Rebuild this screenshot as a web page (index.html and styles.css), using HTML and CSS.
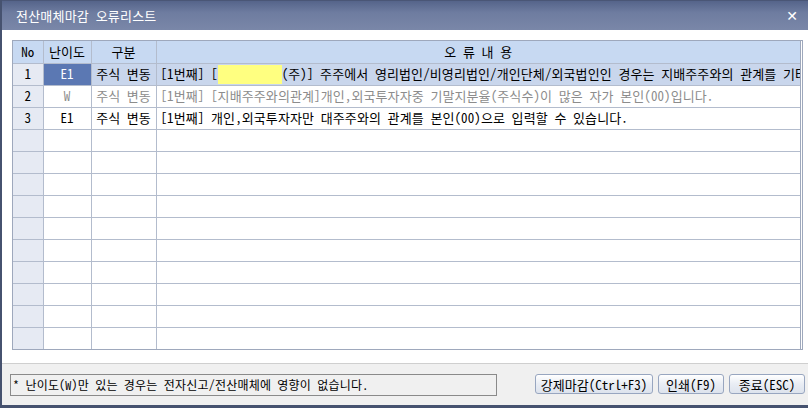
FILE: index.html
```html
<!DOCTYPE html>
<html lang="ko">

<head>
    <meta charset="UTF-8">
    <title>전산매체마감 오류리스트</title>
    <link rel="stylesheet" href="styles.css">
</head>

<body>
    <div class="window">
        <div class="title-bar">
            <span class="title">전산매체마감 오류리스트</span>
            <span class="close">&#x2715;</span>
        </div>
        <div class="content">
            <div class="grid">
                <table class="list">
                    <colgroup>
                        <col class="c-no">
                        <col class="c-level">
                        <col class="c-kind">
                        <col>
                    </colgroup>
                    <thead>
                        <tr>
                            <th>No</th>
                            <th>난이도</th>
                            <th>구분</th>
                            <th>오 류 내 용</th>
                        </tr>
                    </thead>
                    <tbody>
                        <tr class="selected">
                            <td class="no">1</td>
                            <td class="level on">E1</td>
                            <td class="kind">주식 변동</td>
                            <td class="msg">[1번째] [<span class="mark"></span>(주)] 주주에서 영리법인/비영리법인/개인단체/외국법인인 경우는 지배주주와의 관계를 기타</td>
                        </tr>
                        <tr class="warn">
                            <td class="no">2</td>
                            <td class="level">W</td>
                            <td class="kind">주식 변동</td>
                            <td class="msg">[1번째] [지배주주와의관계]개인,외국투자자중 기말지분율(주식수)이 많은 자가 본인(00)입니다.</td>
                        </tr>
                        <tr>
                            <td class="no">3</td>
                            <td class="level">E1</td>
                            <td class="kind">주식 변동</td>
                            <td class="msg">[1번째] 개인,외국투자자만 대주주와의 관계를 본인(00)으로 입력할 수 있습니다.</td>
                        </tr>
                        <tr><td class="no"></td><td></td><td></td><td></td></tr>
                        <tr><td class="no"></td><td></td><td></td><td></td></tr>
                        <tr><td class="no"></td><td></td><td></td><td></td></tr>
                        <tr><td class="no"></td><td></td><td></td><td></td></tr>
                        <tr><td class="no"></td><td></td><td></td><td></td></tr>
                        <tr><td class="no"></td><td></td><td></td><td></td></tr>
                        <tr><td class="no"></td><td></td><td></td><td></td></tr>
                        <tr><td class="no"></td><td></td><td></td><td></td></tr>
                        <tr><td class="no"></td><td></td><td></td><td></td></tr>
                        <tr><td class="no"></td><td></td><td></td><td></td></tr>
                    </tbody>
                </table>
            </div>
        </div>
        <div class="footer">
            <div class="status">* 난이도(W)만 있는 경우는 전자신고/전산매체에 영향이 없습니다.</div>
            <div class="buttons">
                <button class="btn btn-close-force">강제마감(Ctrl+F3)</button>
                <button class="btn btn-print">인쇄(F9)</button>
                <button class="btn btn-exit">종료(ESC)</button>
            </div>
        </div>
    </div>
</body>

</html>
```

FILE: styles.css
```css
* {
    margin: 0;
    padding: 0;
    box-sizing: border-box;
}

body {
    width: 808px;
    height: 408px;
    overflow: hidden;
    font-family: "Noto Sans Mono CJK KR", "Noto Sans CJK KR", "Liberation Mono", monospace;
    font-size: 13px;
    letter-spacing: 0.1px;
    color: #000;
    background-color: #fff;
}

.window {
    width: 808px;
    height: 408px;
    border-left: 2px solid #46526f;
    border-bottom: 3px solid #46526f;
    display: flex;
    flex-direction: column;
    background-color: #fff;
}

.title-bar {
    height: 30px;
    display: flex;
    align-items: center;
    justify-content: space-between;
    padding: 0 10px 0 14px;
    background: linear-gradient(to bottom, #55648a, #6e7ca0 40%, #7a87a8);
    border-top: 1px solid #4a5676;
    color: #fff;
}

.title {
    font-size: 13px;
    letter-spacing: 0.2px;
}

.close {
    font-family: "DejaVu Sans", sans-serif;
    font-size: 14px;
    font-weight: bold;
}

.content {
    padding: 10px 5px 13px 10px;
}

.grid {
    width: 791px;
    border: 1px solid #9ea8bc;
    border-right: 3px double #9ea8bc;
}

.list {
    width: 100%;
    table-layout: fixed;
    border-collapse: collapse;
}

.c-no {
    width: 30px;
}

.c-level {
    width: 48px;
}

.c-kind {
    width: 65px;
}

.list th,
.list td {
    height: 22px;
    border: 1px solid #b3bccd;
    text-align: center;
    font-weight: normal;
    white-space: nowrap;
    overflow: hidden;
    line-height: 20px;
}

.list thead th {
    border-top: none;
}

.list th:first-child,
.list td:first-child {
    border-left: none;
}

.list th:last-child,
.list td:last-child {
    border-right: none;
}

.list tbody tr:last-child td {
    border-bottom: none;
}

.list th {
    background-color: #c7d9f2;
}

.list .no {
    background-color: #e6eaf3;
}

.list .kind {
    letter-spacing: 0;
}

.list .msg {
    text-align: left;
    padding-left: 4px;
    text-overflow: clip;
}

.selected td {
    background-color: #c9d6ec;
}

.selected .no {
    background-color: #e6eaf3;
}

.selected .level.on {
    background-color: #5b78b3;
    color: #fff;
}

.warn td {
    color: #8c8c8c;
}

.warn .no {
    color: #000;
}

.mark {
    display: inline-block;
    width: 64px;
    height: 19px;
    vertical-align: -5px;
    background-color: #ffff80;
}

.footer {
    flex: 1;
    display: flex;
    align-items: flex-start;
    justify-content: space-between;
    padding: 10px 3px 0 8px;
    border-top: 1px solid #cfcfcf;
    background-color: #f0f0f0;
}

.status {
    width: 487px;
    height: 22px;
    line-height: 20px;
    padding-left: 2px;
    font-size: 12px;
    letter-spacing: 0.2px;
    border: 1px solid #8a8a8a;
    background-color: #f0f0f0;
}

.buttons {
    display: flex;
    gap: 5px;
}

.btn {
    height: 20px;
    padding: 0;
    font-family: inherit;
    font-size: 13px;
    letter-spacing: 0;
    color: #000;
    border: 1px solid #98a6c0;
    border-radius: 3px;
    background: linear-gradient(to bottom, #ffffff, #e9edf4 50%, #dde3ed);
}

.btn-close-force {
    width: 118px;
}

.btn-print {
    width: 66px;
}

.btn-exit {
    width: 76px;
}
```
